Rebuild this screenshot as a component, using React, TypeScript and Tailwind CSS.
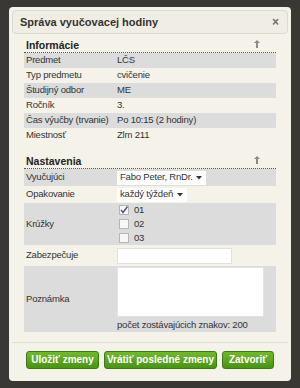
import React from "react";

const font = { fontFamily: '"Liberation Sans", Arial, sans-serif' };

const txt = "text-[9.5px] tracking-[-0.2px] text-[#333] whitespace-nowrap";

function Row({ label, value, gray }: { label: string; value: React.ReactNode; gray?: boolean }) {
  return (
    <div className={`flex h-[15px] items-center ${gray ? "bg-[#dcdcdc]" : ""}`}>
      <div className={`w-[89px] pl-[2px] ${txt}`}>{label}</div>
      <div className={`flex-1 pl-[4px] ${txt}`}>{value}</div>
    </div>
  );
}

function Heading({ title }: { title: string }) {
  return (
    <div className="flex items-end justify-between h-[15px] border-b border-dotted border-[#555] pl-[2px] pr-[16px]">
      <span className="text-[10.5px] font-bold text-[#222] leading-[13px]">{title}</span>
      <svg width="6" height="8" viewBox="0 0 6 8" className="mb-[4px]">
        <path d="M3 0 L6 3 L4 3 L4 8 L2 8 L2 3 L0 3 Z" fill="#8a8a8a" />
      </svg>
    </div>
  );
}

function Select({ text, w }: { text: string; w: string }) {
  return (
    <div className={`flex items-center justify-between h-[14px] bg-white pl-[3px] pr-[4px] ${w}`}>
      <span className={txt}>{text}</span>
      <svg width="6" height="4" viewBox="0 0 6 4">
        <path d="M0 0 L6 0 L3 3.5 Z" fill="#333" />
      </svg>
    </div>
  );
}

function Check({ label, checked }: { label: string; checked?: boolean }) {
  return (
    <div className="flex items-center h-[14px] gap-[5px]">
      <span className="relative w-[10px] h-[10px] border border-[#b5b5b5] bg-[#f7f7f7]">
        {checked && (
          <svg width="10" height="10" viewBox="0 0 10 10" className="absolute -top-[1px] -left-[1px]">
            <path d="M2 5 L4 7.5 L8.5 1.5" stroke="#4a5a7a" strokeWidth="1.4" fill="none" />
          </svg>
        )}
      </span>
      <span className={txt}>{label}</span>
    </div>
  );
}

function Btn({ children, w }: { children: React.ReactNode; w: string }) {
  return (
    <button
      className={`h-[18px] ${w} rounded-[3px] border border-[#3c7a12] bg-gradient-to-b from-[#72b82e] to-[#4b9316] text-white text-[10px] font-bold leading-none whitespace-nowrap`}
    >
      {children}
    </button>
  );
}

export default function App() {
  return (
    <div className="w-[300px] h-[388px] bg-[#3a3834] pt-[7px] pl-[9px]" style={font}>
      <div className="w-[282px] h-[374px] bg-[#f4f2e9] rounded-[4px] p-[3px] flex flex-col">
        <div className="h-[24px] flex items-center justify-between border border-[#dcd9cd] bg-[#f0eee4] rounded-[4px] pl-[7px] pr-[8px]">
          <span className="text-[11px] font-bold text-[#333]">Správa vyučovacej hodiny</span>
          <span className="text-[12px] font-bold text-[#6f6f6f] leading-none">×</span>
        </div>

        <div className="px-[12px] mt-[4px]">
          <Heading title="Informácie" />
          <Row label="Predmet" value="LČS" gray />
          <Row label="Typ predmetu" value="cvičenie" />
          <Row label="Študijný odbor" value="ME" gray />
          <Row label="Ročník" value="3." />
          <Row label="Čas výučby (trvanie)" value="Po 10:15 (2 hodiny)" gray />
          <Row label="Miestnosť" value="Zlm 211" />

          <div className="mt-[11px]">
            <Heading title="Nastavenia" />
          </div>
          <div className="flex h-[17px] items-center bg-[#dcdcdc]">
            <div className={`w-[89px] pl-[2px] ${txt}`}>Vyučujúci</div>
            <div className="pl-[4px]">
              <Select text="Fabo Peter, RnDr." w="w-[89px]" />
            </div>
          </div>
          <div className="flex h-[17px] items-center">
            <div className={`w-[89px] pl-[2px] ${txt}`}>Opakovanie</div>
            <div className="pl-[4px]">
              <Select text="každý týždeň" w="w-[70px]" />
            </div>
          </div>
          <div className="flex h-[42px] items-center bg-[#dcdcdc]">
            <div className={`w-[89px] pl-[2px] ${txt}`}>Krúžky</div>
            <div className="pl-[6px] flex flex-col">
              <Check label="01" checked />
              <Check label="02" />
              <Check label="03" />
            </div>
          </div>
          <div className="flex h-[21px] items-center">
            <div className={`w-[89px] pl-[2px] ${txt}`}>Zabezpečuje</div>
            <div className="pl-[4px]">
              <div className="w-[115px] h-[16px] bg-white border border-[#e2e0d8]" />
            </div>
          </div>
          <div className="flex h-[66px] items-center bg-[#dcdcdc]">
            <div className={`w-[89px] pl-[2px] ${txt}`}>Poznámka</div>
            <div className="pl-[4px] flex flex-col pt-[2px]">
              <div className="w-[147px] h-[50px] bg-white border border-[#e2e2e2]" />
              <span className={`${txt} mt-[1px]`}>počet zostávajúcich znakov: 200</span>
            </div>
          </div>
        </div>

        <div className="mt-[10px] border-t border-[#e0ddd2] flex justify-center gap-[5px] pt-[8px]">
          <Btn w="w-[73px]">Uložiť zmeny</Btn>
          <Btn w="w-[113px]">Vrátiť posledné zmeny</Btn>
          <Btn w="w-[52px]">Zatvoriť</Btn>
        </div>
      </div>
    </div>
  );
}
